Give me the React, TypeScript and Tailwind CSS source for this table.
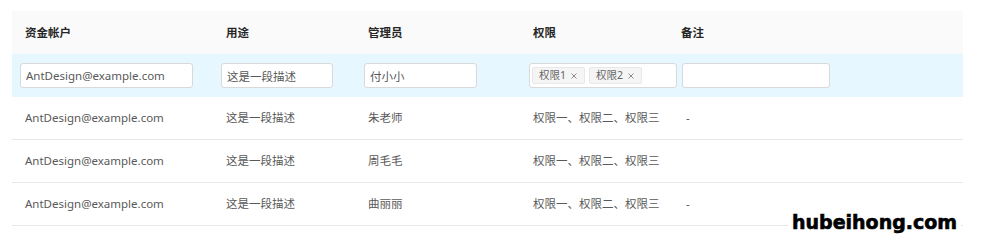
import React from 'react';

const font = "font-['Noto_Sans','Noto_Sans_CJK_SC',sans-serif]";
const cols = 'grid grid-cols-[201px_142px_165px_153px_1fr] items-center';

type Row = { account: string; usage: string; admin: string; perms: string; note: string };

const rows: Row[] = [
  { account: 'AntDesign@example.com', usage: '这是一段描述', admin: '朱老师', perms: '权限一、权限二、权限三', note: '-' },
  { account: 'AntDesign@example.com', usage: '这是一段描述', admin: '周毛毛', perms: '权限一、权限二、权限三', note: '' },
  { account: 'AntDesign@example.com', usage: '这是一段描述', admin: '曲丽丽', perms: '权限一、权限二、权限三', note: '-' },
];

const Field = ({ value, width }: { value: string; width: string }) => (
  <input
    readOnly
    defaultValue={value}
    className={`${width} h-[25px] border border-[#d9d9d9] rounded-[3px] bg-white px-[5px] text-[11.5px] text-[#595959] outline-none ${font}`}
  />
);

const Tag = ({ label }: { label: string }) => (
  <span className="flex items-center h-[17px] border border-[#e8e8e8] bg-[#f5f5f5] rounded-[2px] pl-[6px] pr-[7px] gap-[5px] text-[10.5px] text-[#666]">
    {label}
    <svg width="6" height="6" viewBox="0 0 6 6" className="mt-[1px]">
      <path d="M0.5 0.5 L5.5 5.5 M5.5 0.5 L0.5 5.5" stroke="#8c8c8c" strokeWidth="1" />
    </svg>
  </span>
);

export default function App() {
  return (
    <div className={`relative w-[981px] h-[246px] bg-white pt-[11px] pl-[12px] ${font}`}>
      <div className="w-[951px] text-[11.5px]">
        {/* header */}
        <div className={`${cols} h-[43px] bg-[#fafafa] font-bold text-[#262626]`}>
          <div className="pl-[13px]">资金帐户</div>
          <div className="pl-[13px]">用途</div>
          <div className="pl-[13px]">管理员</div>
          <div className="pl-[13px]">权限</div>
          <div className="pl-2">备注</div>
        </div>

        {/* row being edited */}
        <div className={`${cols} h-[43px] bg-[#e6f7ff]`}>
          <div className="pl-2">
            <Field value="AntDesign@example.com" width="w-[173px]" />
          </div>
          <div className="pl-2">
            <Field value="这是一段描述" width="w-[112px]" />
          </div>
          <div className="pl-[9px]">
            <Field value="付小小" width="w-[113px]" />
          </div>
          <div className="pl-[9px]">
            <div className="w-[148px] h-[25px] border border-[#d9d9d9] rounded-[3px] bg-white flex items-center gap-[4px] pl-[2px]">
              <Tag label="权限1" />
              <Tag label="权限2" />
            </div>
          </div>
          <div className="pl-[9px]">
            <Field value="" width="w-[148px]" />
          </div>
        </div>

        {rows.map((r, i) => (
          <div key={i} className={`${cols} h-[43px] border-b border-[#e8e8e8] text-[#595959]`}>
            <div className="pl-[13px]">{r.account}</div>
            <div className="pl-[13px]">{r.usage}</div>
            <div className="pl-[13px]">{r.admin}</div>
            <div className="pl-[13px]">{r.perms}</div>
            <div className="pl-[13px]">{r.note}</div>
          </div>
        ))}
      </div>

      <div className="absolute left-[788px] top-[210px] bg-white px-[4px] leading-[24px] font-['DejaVu_Sans',sans-serif] font-bold text-[19px] text-black [-webkit-text-stroke:0.6px_black]">
        hubeihong.com
      </div>
    </div>
  );
}
